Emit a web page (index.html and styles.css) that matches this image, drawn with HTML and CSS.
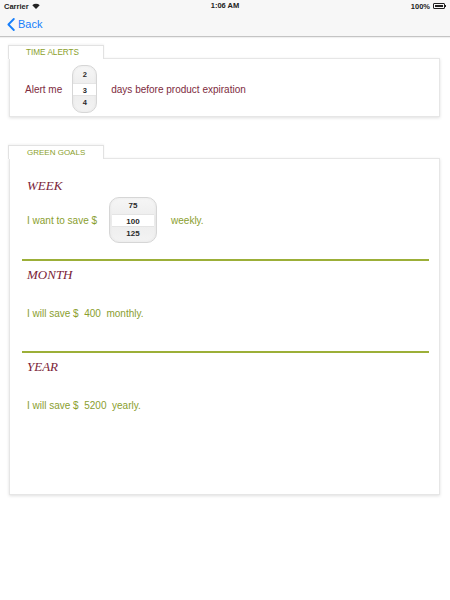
FILE: index.html
```html
<!DOCTYPE html>
<html>
<head>
<meta charset="utf-8">
<link rel="stylesheet" href="styles.css">
</head>
<body>
<header class="topbar">
  <div class="status">
    <div class="status-left">
      <span>Carrier</span>
      <svg class="wifi" width="8" height="6" viewBox="0 0 8 6"><path d="M4 6 L0.3 2.2 A5.4 5.4 0 0 1 7.7 2.2 Z" fill="#222"/></svg>
    </div>
    <div class="status-mid">1:06 AM</div>
    <div class="status-right">
      <span>100%</span>
      <span class="battery"><span class="battery-fill"></span></span>
      <span class="battery-tip"></span>
    </div>
  </div>
  <nav class="nav">
    <a class="back">
      <svg width="8" height="13" viewBox="0 0 8 13"><path d="M6.8 1 L1.4 6.5 L6.8 12" fill="none" stroke="#167efb" stroke-width="1.8" stroke-linecap="round" stroke-linejoin="round"/></svg>
      <span>Back</span>
    </a>
  </nav>
</header>

<main class="content">
  <section class="group group-alerts">
    <div class="tab tab-alerts">TIME ALERTS</div>
    <div class="card card-alerts">
      <div class="row alert-row">
        <span class="maroon">Alert me</span>
        <div class="picker picker-sm">
          <span class="opt">2</span>
          <span class="opt sel">3</span>
          <span class="opt">4</span>
        </div>
        <span class="maroon after-sm">days before product expiration</span>
      </div>
    </div>
  </section>

  <section class="group group-goals">
    <div class="tab tab-goals">GREEN GOALS</div>
    <div class="card card-goals">
      <div class="period period-week">
        <h2 class="heading heading-week">WEEK</h2>
        <div class="row week-row">
          <span class="green">I want to save $</span>
          <div class="picker picker-lg">
            <span class="opt">75</span>
            <span class="opt sel">100</span>
            <span class="opt">125</span>
          </div>
          <span class="green after-lg">weekly.</span>
        </div>
      </div>
      <hr class="divider">
      <div class="period">
        <h2 class="heading">MONTH</h2>
        <p class="green saving">I will save $  400  monthly.</p>
      </div>
      <hr class="divider divider-2">
      <div class="period">
        <h2 class="heading">YEAR</h2>
        <p class="green saving">I will save $  5200  yearly.</p>
      </div>
    </div>
  </section>
</main>
</body>
</html>
```

FILE: styles.css
```css
* { box-sizing: border-box; }

html, body {
  margin: 0;
  padding: 0;
  background: #ffffff;
  font-family: "Liberation Sans", Arial, sans-serif;
  width: 450px;
  height: 600px;
  overflow: hidden;
}

.topbar {
  background: #f7f7f7;
  border-bottom: 1px solid #c4c4c4;
  box-shadow: 0 1px 1px rgba(0, 0, 0, 0.06);
}

.status {
  height: 12px;
  display: flex;
  align-items: center;
  justify-content: space-between;
  padding: 0 4px;
  font-size: 7.5px;
  font-weight: bold;
  color: #222;
  position: relative;
}

.status-left {
  display: flex;
  align-items: center;
  gap: 3px;
}

.status-mid {
  position: absolute;
  left: 0;
  right: 0;
  text-align: center;
  top: 2px;
  line-height: 8px;
}

.status-right {
  display: flex;
  align-items: center;
}

.battery {
  margin-left: 3px;
  width: 12px;
  height: 6px;
  border: 1px solid #222;
  border-radius: 1px;
  padding: 1px;
  display: flex;
}

.battery-fill {
  flex: 1;
  background: #222;
}

.battery-tip {
  width: 1px;
  height: 2px;
  background: #222;
}

.nav {
  height: 24px;
  display: flex;
  align-items: center;
  padding-left: 7px;
}

.back {
  display: flex;
  align-items: center;
  gap: 3px;
  color: #167efb;
  font-size: 11px;
}

.content {
  padding: 8px 10px 0 9px;
}

.group {
  display: flex;
  flex-direction: column;
}

.group-goals {
  margin-top: 28px;
}

.tab {
  width: 96px;
  height: 14px;
  margin-left: -1px;
  background: #fff;
  border: 1px solid #e2e2e2;
  border-bottom: none;
  box-shadow: 0 -1px 2px rgba(0, 0, 0, 0.05);
  color: #8b9f2c;
  font-size: 8.2px;
  line-height: 13px;
  padding-left: 17px;
  position: relative;
  z-index: 2;
  margin-bottom: -1px;
}

.tab-goals {
  padding-left: 18px;
  font-size: 8px;
}

.card {
  background: #fff;
  border: 1px solid #e6e6e6;
  box-shadow: 0 1px 3px rgba(0, 0, 0, 0.13);
  position: relative;
  z-index: 1;
}

.card-alerts {
  padding: 6px 10px 3px 15px;
}

.row {
  display: flex;
  align-items: center;
  font-size: 10px;
}

.maroon { color: #7e2b3d; }
.green { color: #8a9e2e; }

.picker {
  display: flex;
  flex-direction: column;
  justify-content: center;
  align-items: stretch;
  border: 1px solid #d6d6d6;
  border-radius: 10px;
  background: linear-gradient(#f6f6f6, #ececec 50%, #f3f3f3);
  box-shadow: inset 0 0 3px rgba(0, 0, 0, 0.06);
}

.opt {
  display: block;
  height: 14px;
  line-height: 14px;
  text-align: center;
  font-size: 7.5px;
  font-weight: bold;
  color: #2a2a2a;
}

.opt.sel {
  background: #fff;
  height: 13px;
  line-height: 13px;
  margin: 0.5px 2px;
  border-top: 1px solid #e4e4e4;
  border-bottom: 1px solid #e4e4e4;
}

.picker-sm {
  width: 25px;
  height: 48px;
  margin-left: 10px;
}

.picker-sm .opt.sel {
  margin: 0.5px 0;
}

.after-sm {
  margin-left: 14px;
}

.card-goals {
  padding: 19px 10px 81px 12px;
}

.heading {
  margin: 6px 0 0 0;
  padding-left: 5px;
  font-family: "Liberation Serif", "Times New Roman", serif;
  font-style: italic;
  font-weight: normal;
  font-size: 13px;
  line-height: 16px;
  color: #7b2438;
}

.heading-week {
  margin-top: 0;
}

.week-row {
  padding-left: 5px;
  margin-top: 3px;
}

.picker-lg {
  width: 48px;
  height: 46px;
  margin-left: 12px;
}

.picker-lg .opt {
  font-size: 8px;
}

.after-lg {
  margin-left: 14px;
}

.divider {
  margin: 16px 0 0 0;
  border: none;
  height: 2px;
  background: #9caf38;
}

.divider-2 {
  margin-top: 30px;
}

.saving {
  margin: 24px 0 0 0;
  padding-left: 5px;
  font-size: 10px;
  line-height: 14px;
  white-space: pre;
}
```
